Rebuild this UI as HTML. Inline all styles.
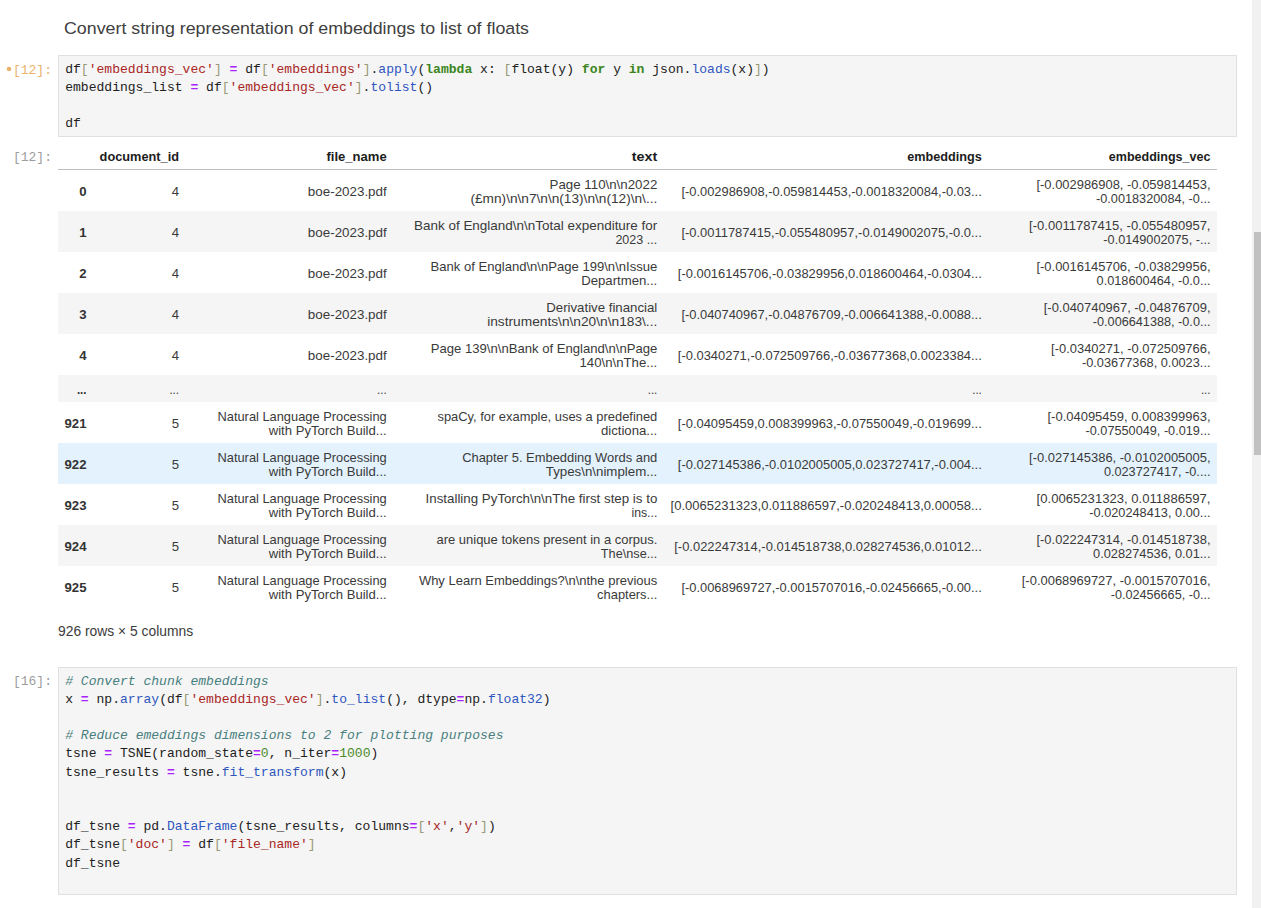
<!DOCTYPE html>
<html><head><meta charset="utf-8"><style>
html,body{margin:0;padding:0;background:#fff;width:1261px;height:908px;overflow:hidden}
svg{display:block}
text{white-space:pre}
</style></head><body>
<svg width="1261" height="908" viewBox="0 0 1261 908">
<rect x="58.5" y="55.5" width="1178" height="81" fill="#f5f5f5" stroke="#e0e0e0" stroke-width="1"/>
<circle cx="9" cy="69" r="2.3" fill="#e9b36e"/>
<rect x="58" y="211" width="1159" height="41" fill="#f5f5f5"/>
<rect x="58" y="293" width="1159" height="41" fill="#f5f5f5"/>
<rect x="58" y="375" width="1159" height="27" fill="#f5f5f5"/>
<rect x="58" y="443" width="1159" height="41" fill="#e3f2fd"/>
<rect x="58" y="525" width="1159" height="41" fill="#f5f5f5"/>
<rect x="58" y="169" width="1159" height="1" fill="#bdbdbd"/>
<rect x="58.5" y="667.5" width="1178" height="227" fill="#f5f5f5" stroke="#e0e0e0" stroke-width="1"/>
<rect x="1252" y="0" width="9" height="908" fill="#f1f1f1"/>
<rect x="1254" y="232" width="7" height="223" fill="#c1c1c1"/>
<text id="title" x="64.00" y="33.60" text-anchor="start" font-family="'Liberation Sans', sans-serif" font-size="17.20" fill="#404040" textLength="465.03" lengthAdjust="spacingAndGlyphs">Convert string representation of embeddings to list of floats</text>
<text id="p1" x="12.90" y="73.70" text-anchor="start" font-family="'Liberation Mono', monospace" font-size="13.00" fill="#e9b36e" textLength="39.14" lengthAdjust="spacingAndGlyphs">[12]:</text>
<text id="c1_0" x="65.20" y="73.00" text-anchor="start" font-family="'Liberation Mono', monospace" font-size="13.00" fill="#212121" textLength="704.50" lengthAdjust="spacingAndGlyphs"><tspan fill="#212121">df</tspan><tspan fill="#999977">[</tspan><tspan fill="#a8261f">'embeddings_vec'</tspan><tspan fill="#999977">]</tspan><tspan fill="#212121"> </tspan><tspan fill="#aa22ff" font-weight="700">=</tspan><tspan fill="#212121"> df</tspan><tspan fill="#999977">[</tspan><tspan fill="#a8261f">'embeddings'</tspan><tspan fill="#999977">]</tspan><tspan fill="#212121">.</tspan><tspan fill="#2f56bf">apply</tspan><tspan fill="#212121">(</tspan><tspan fill="#3a8520" font-weight="700">lambda</tspan><tspan fill="#212121"> x: </tspan><tspan fill="#999977">[</tspan><tspan fill="#212121">float(y) </tspan><tspan fill="#3a8520" font-weight="700">for</tspan><tspan fill="#212121"> y </tspan><tspan fill="#3a8520" font-weight="700">in</tspan><tspan fill="#212121"> json.</tspan><tspan fill="#2f56bf">loads</tspan><tspan fill="#212121">(x)</tspan><tspan fill="#999977">]</tspan><tspan fill="#212121">)</tspan></text>
<text id="c1_1" x="65.20" y="90.90" text-anchor="start" font-family="'Liberation Mono', monospace" font-size="13.00" fill="#212121" textLength="367.89" lengthAdjust="spacingAndGlyphs"><tspan fill="#212121">embeddings_list </tspan><tspan fill="#aa22ff" font-weight="700">=</tspan><tspan fill="#212121"> df</tspan><tspan fill="#999977">[</tspan><tspan fill="#a8261f">'embeddings_vec'</tspan><tspan fill="#999977">]</tspan><tspan fill="#212121">.</tspan><tspan fill="#2f56bf">tolist</tspan><tspan fill="#212121">()</tspan></text>
<text id="c1_3" x="65.20" y="126.70" text-anchor="start" font-family="'Liberation Mono', monospace" font-size="13.00" fill="#212121" textLength="15.66" lengthAdjust="spacingAndGlyphs"><tspan fill="#212121">df</tspan></text>
<text id="p2" x="12.90" y="160.90" text-anchor="start" font-family="'Liberation Mono', monospace" font-size="13.00" fill="#9e9e9e" textLength="39.14" lengthAdjust="spacingAndGlyphs">[12]:</text>
<text id="h1" x="179.00" y="160.50" text-anchor="end" font-family="'Liberation Sans', sans-serif" font-size="13.00" font-weight="700" fill="#1c1c1c" textLength="79.39" lengthAdjust="spacingAndGlyphs">document_id</text>
<text id="h2" x="386.70" y="160.50" text-anchor="end" font-family="'Liberation Sans', sans-serif" font-size="13.00" font-weight="700" fill="#1c1c1c" textLength="60.20" lengthAdjust="spacingAndGlyphs">file_name</text>
<text id="h3" x="657.30" y="160.50" text-anchor="end" font-family="'Liberation Sans', sans-serif" font-size="13.00" font-weight="700" fill="#1c1c1c" textLength="25.55" lengthAdjust="spacingAndGlyphs">text</text>
<text id="h4" x="981.80" y="160.50" text-anchor="end" font-family="'Liberation Sans', sans-serif" font-size="13.00" font-weight="700" fill="#1c1c1c" textLength="74.56" lengthAdjust="spacingAndGlyphs">embeddings</text>
<text id="h5" x="1210.50" y="160.50" text-anchor="end" font-family="'Liberation Sans', sans-serif" font-size="13.00" font-weight="700" fill="#1c1c1c" textLength="101.72" lengthAdjust="spacingAndGlyphs">embeddings_vec</text>
<text id="r0c0l0" x="86.50" y="196.10" text-anchor="end" font-family="'Liberation Sans', sans-serif" font-size="13.00" font-weight="700" fill="#333333" textLength="7.34" lengthAdjust="spacingAndGlyphs">0</text>
<text id="r0c1l0" x="179.00" y="196.10" text-anchor="end" font-family="'Liberation Sans', sans-serif" font-size="13.00" fill="#3a3a3a" textLength="7.34" lengthAdjust="spacingAndGlyphs">4</text>
<text id="r0c2l0" x="386.70" y="196.10" text-anchor="end" font-family="'Liberation Sans', sans-serif" font-size="13.00" fill="#3a3a3a" textLength="78.84" lengthAdjust="spacingAndGlyphs">boe-2023.pdf</text>
<text id="r0c3l0" x="657.30" y="189.10" text-anchor="end" font-family="'Liberation Sans', sans-serif" font-size="13.00" fill="#3a3a3a" textLength="107.72" lengthAdjust="spacingAndGlyphs">Page 110\n\n2022</text>
<text id="r0c3l1" x="657.30" y="203.10" text-anchor="end" font-family="'Liberation Sans', sans-serif" font-size="13.00" fill="#3a3a3a" textLength="186.84" lengthAdjust="spacingAndGlyphs">(£mn)\n\n7\n\n(13)\n\n(12)\n\...</text>
<text id="r0c4l0" x="981.80" y="196.10" text-anchor="end" font-family="'Liberation Sans', sans-serif" font-size="13.00" fill="#3a3a3a" textLength="300.42" lengthAdjust="spacingAndGlyphs">[-0.002986908,-0.059814453,-0.0018320084,-0.03...</text>
<text id="r0c5l0" x="1210.50" y="189.10" text-anchor="end" font-family="'Liberation Sans', sans-serif" font-size="13.00" fill="#3a3a3a" textLength="174.05" lengthAdjust="spacingAndGlyphs">[-0.002986908, -0.059814453,</text>
<text id="r0c5l1" x="1210.50" y="203.10" text-anchor="end" font-family="'Liberation Sans', sans-serif" font-size="13.00" fill="#3a3a3a" textLength="114.47" lengthAdjust="spacingAndGlyphs">-0.0018320084, -0...</text>
<text id="r1c0l0" x="86.50" y="237.10" text-anchor="end" font-family="'Liberation Sans', sans-serif" font-size="13.00" font-weight="700" fill="#333333" textLength="7.34" lengthAdjust="spacingAndGlyphs">1</text>
<text id="r1c1l0" x="179.00" y="237.10" text-anchor="end" font-family="'Liberation Sans', sans-serif" font-size="13.00" fill="#3a3a3a" textLength="7.34" lengthAdjust="spacingAndGlyphs">4</text>
<text id="r1c2l0" x="386.70" y="237.10" text-anchor="end" font-family="'Liberation Sans', sans-serif" font-size="13.00" fill="#3a3a3a" textLength="78.84" lengthAdjust="spacingAndGlyphs">boe-2023.pdf</text>
<text id="r1c3l0" x="657.30" y="230.10" text-anchor="end" font-family="'Liberation Sans', sans-serif" font-size="13.00" fill="#3a3a3a" textLength="243.33" lengthAdjust="spacingAndGlyphs">Bank of England\n\nTotal expenditure for</text>
<text id="r1c3l1" x="657.30" y="244.10" text-anchor="end" font-family="'Liberation Sans', sans-serif" font-size="13.00" fill="#3a3a3a" textLength="41.91" lengthAdjust="spacingAndGlyphs">2023 ...</text>
<text id="r1c4l0" x="981.80" y="237.10" text-anchor="end" font-family="'Liberation Sans', sans-serif" font-size="13.00" fill="#3a3a3a" textLength="300.42" lengthAdjust="spacingAndGlyphs">[-0.0011787415,-0.055480957,-0.0149002075,-0.0...</text>
<text id="r1c5l0" x="1210.50" y="230.10" text-anchor="end" font-family="'Liberation Sans', sans-serif" font-size="13.00" fill="#3a3a3a" textLength="181.39" lengthAdjust="spacingAndGlyphs">[-0.0011787415, -0.055480957,</text>
<text id="r1c5l1" x="1210.50" y="244.10" text-anchor="end" font-family="'Liberation Sans', sans-serif" font-size="13.00" fill="#3a3a3a" textLength="107.14" lengthAdjust="spacingAndGlyphs">-0.0149002075, -...</text>
<text id="r2c0l0" x="86.50" y="278.10" text-anchor="end" font-family="'Liberation Sans', sans-serif" font-size="13.00" font-weight="700" fill="#333333" textLength="7.34" lengthAdjust="spacingAndGlyphs">2</text>
<text id="r2c1l0" x="179.00" y="278.10" text-anchor="end" font-family="'Liberation Sans', sans-serif" font-size="13.00" fill="#3a3a3a" textLength="7.34" lengthAdjust="spacingAndGlyphs">4</text>
<text id="r2c2l0" x="386.70" y="278.10" text-anchor="end" font-family="'Liberation Sans', sans-serif" font-size="13.00" fill="#3a3a3a" textLength="78.84" lengthAdjust="spacingAndGlyphs">boe-2023.pdf</text>
<text id="r2c3l0" x="657.30" y="271.10" text-anchor="end" font-family="'Liberation Sans', sans-serif" font-size="13.00" fill="#3a3a3a" textLength="226.78" lengthAdjust="spacingAndGlyphs">Bank of England\n\nPage 199\n\nIssue</text>
<text id="r2c3l1" x="657.30" y="285.10" text-anchor="end" font-family="'Liberation Sans', sans-serif" font-size="13.00" fill="#3a3a3a" textLength="76.09" lengthAdjust="spacingAndGlyphs">Departmen...</text>
<text id="r2c4l0" x="981.80" y="278.10" text-anchor="end" font-family="'Liberation Sans', sans-serif" font-size="13.00" fill="#3a3a3a" textLength="304.00" lengthAdjust="spacingAndGlyphs">[-0.0016145706,-0.03829956,0.018600464,-0.0304...</text>
<text id="r2c5l0" x="1210.50" y="271.10" text-anchor="end" font-family="'Liberation Sans', sans-serif" font-size="13.00" fill="#3a3a3a" textLength="174.05" lengthAdjust="spacingAndGlyphs">[-0.0016145706, -0.03829956,</text>
<text id="r2c5l1" x="1210.50" y="285.10" text-anchor="end" font-family="'Liberation Sans', sans-serif" font-size="13.00" fill="#3a3a3a" textLength="113.91" lengthAdjust="spacingAndGlyphs">0.018600464, -0.0...</text>
<text id="r3c0l0" x="86.50" y="319.10" text-anchor="end" font-family="'Liberation Sans', sans-serif" font-size="13.00" font-weight="700" fill="#333333" textLength="7.34" lengthAdjust="spacingAndGlyphs">3</text>
<text id="r3c1l0" x="179.00" y="319.10" text-anchor="end" font-family="'Liberation Sans', sans-serif" font-size="13.00" fill="#3a3a3a" textLength="7.34" lengthAdjust="spacingAndGlyphs">4</text>
<text id="r3c2l0" x="386.70" y="319.10" text-anchor="end" font-family="'Liberation Sans', sans-serif" font-size="13.00" fill="#3a3a3a" textLength="78.84" lengthAdjust="spacingAndGlyphs">boe-2023.pdf</text>
<text id="r3c3l0" x="657.30" y="312.10" text-anchor="end" font-family="'Liberation Sans', sans-serif" font-size="13.00" fill="#3a3a3a" textLength="111.08" lengthAdjust="spacingAndGlyphs">Derivative financial</text>
<text id="r3c3l1" x="657.30" y="326.10" text-anchor="end" font-family="'Liberation Sans', sans-serif" font-size="13.00" fill="#3a3a3a" textLength="170.12" lengthAdjust="spacingAndGlyphs">instruments\n\n20\n\n183\...</text>
<text id="r3c4l0" x="981.80" y="319.10" text-anchor="end" font-family="'Liberation Sans', sans-serif" font-size="13.00" fill="#3a3a3a" textLength="300.42" lengthAdjust="spacingAndGlyphs">[-0.040740967,-0.04876709,-0.006641388,-0.0088...</text>
<text id="r3c5l0" x="1210.50" y="312.10" text-anchor="end" font-family="'Liberation Sans', sans-serif" font-size="13.00" fill="#3a3a3a" textLength="166.72" lengthAdjust="spacingAndGlyphs">[-0.040740967, -0.04876709,</text>
<text id="r3c5l1" x="1210.50" y="326.10" text-anchor="end" font-family="'Liberation Sans', sans-serif" font-size="13.00" fill="#3a3a3a" textLength="117.67" lengthAdjust="spacingAndGlyphs">-0.006641388, -0.0...</text>
<text id="r4c0l0" x="86.50" y="360.10" text-anchor="end" font-family="'Liberation Sans', sans-serif" font-size="13.00" font-weight="700" fill="#333333" textLength="7.34" lengthAdjust="spacingAndGlyphs">4</text>
<text id="r4c1l0" x="179.00" y="360.10" text-anchor="end" font-family="'Liberation Sans', sans-serif" font-size="13.00" fill="#3a3a3a" textLength="7.34" lengthAdjust="spacingAndGlyphs">4</text>
<text id="r4c2l0" x="386.70" y="360.10" text-anchor="end" font-family="'Liberation Sans', sans-serif" font-size="13.00" fill="#3a3a3a" textLength="78.84" lengthAdjust="spacingAndGlyphs">boe-2023.pdf</text>
<text id="r4c3l0" x="657.30" y="353.10" text-anchor="end" font-family="'Liberation Sans', sans-serif" font-size="13.00" fill="#3a3a3a" textLength="226.56" lengthAdjust="spacingAndGlyphs">Page 139\n\nBank of England\n\nPage</text>
<text id="r4c3l1" x="657.30" y="367.10" text-anchor="end" font-family="'Liberation Sans', sans-serif" font-size="13.00" fill="#3a3a3a" textLength="77.84" lengthAdjust="spacingAndGlyphs">140\n\nThe...</text>
<text id="r4c4l0" x="981.80" y="360.10" text-anchor="end" font-family="'Liberation Sans', sans-serif" font-size="13.00" fill="#3a3a3a" textLength="304.00" lengthAdjust="spacingAndGlyphs">[-0.0340271,-0.072509766,-0.03677368,0.0023384...</text>
<text id="r4c5l0" x="1210.50" y="353.10" text-anchor="end" font-family="'Liberation Sans', sans-serif" font-size="13.00" fill="#3a3a3a" textLength="159.39" lengthAdjust="spacingAndGlyphs">[-0.0340271, -0.072509766,</text>
<text id="r4c5l1" x="1210.50" y="367.10" text-anchor="end" font-family="'Liberation Sans', sans-serif" font-size="13.00" fill="#3a3a3a" textLength="128.58" lengthAdjust="spacingAndGlyphs">-0.03677368, 0.0023...</text>
<text id="r5c0l0" x="86.50" y="394.10" text-anchor="end" font-family="'Liberation Sans', sans-serif" font-size="13.00" font-weight="700" fill="#333333" textLength="9.61" lengthAdjust="spacingAndGlyphs">...</text>
<text id="r5c1l0" x="179.00" y="394.10" text-anchor="end" font-family="'Liberation Sans', sans-serif" font-size="13.00" fill="#3a3a3a" textLength="9.61" lengthAdjust="spacingAndGlyphs">...</text>
<text id="r5c2l0" x="386.70" y="394.10" text-anchor="end" font-family="'Liberation Sans', sans-serif" font-size="13.00" fill="#3a3a3a" textLength="9.61" lengthAdjust="spacingAndGlyphs">...</text>
<text id="r5c3l0" x="657.30" y="394.10" text-anchor="end" font-family="'Liberation Sans', sans-serif" font-size="13.00" fill="#3a3a3a" textLength="9.61" lengthAdjust="spacingAndGlyphs">...</text>
<text id="r5c4l0" x="981.80" y="394.10" text-anchor="end" font-family="'Liberation Sans', sans-serif" font-size="13.00" fill="#3a3a3a" textLength="9.61" lengthAdjust="spacingAndGlyphs">...</text>
<text id="r5c5l0" x="1210.50" y="394.10" text-anchor="end" font-family="'Liberation Sans', sans-serif" font-size="13.00" fill="#3a3a3a" textLength="9.61" lengthAdjust="spacingAndGlyphs">...</text>
<text id="r6c0l0" x="86.50" y="428.10" text-anchor="end" font-family="'Liberation Sans', sans-serif" font-size="13.00" font-weight="700" fill="#333333" textLength="22.00" lengthAdjust="spacingAndGlyphs">921</text>
<text id="r6c1l0" x="179.00" y="428.10" text-anchor="end" font-family="'Liberation Sans', sans-serif" font-size="13.00" fill="#3a3a3a" textLength="7.34" lengthAdjust="spacingAndGlyphs">5</text>
<text id="r6c2l0" x="386.70" y="421.10" text-anchor="end" font-family="'Liberation Sans', sans-serif" font-size="13.00" fill="#3a3a3a" textLength="169.23" lengthAdjust="spacingAndGlyphs">Natural Language Processing</text>
<text id="r6c2l1" x="386.70" y="435.10" text-anchor="end" font-family="'Liberation Sans', sans-serif" font-size="13.00" fill="#3a3a3a" textLength="117.95" lengthAdjust="spacingAndGlyphs">with PyTorch Build...</text>
<text id="r6c3l0" x="657.30" y="421.10" text-anchor="end" font-family="'Liberation Sans', sans-serif" font-size="13.00" fill="#3a3a3a" textLength="219.86" lengthAdjust="spacingAndGlyphs">spaCy, for example, uses a predefined</text>
<text id="r6c3l1" x="657.30" y="435.10" text-anchor="end" font-family="'Liberation Sans', sans-serif" font-size="13.00" fill="#3a3a3a" textLength="56.39" lengthAdjust="spacingAndGlyphs">dictiona...</text>
<text id="r6c4l0" x="981.80" y="428.10" text-anchor="end" font-family="'Liberation Sans', sans-serif" font-size="13.00" fill="#3a3a3a" textLength="304.00" lengthAdjust="spacingAndGlyphs">[-0.04095459,0.008399963,-0.07550049,-0.019699...</text>
<text id="r6c5l0" x="1210.50" y="421.10" text-anchor="end" font-family="'Liberation Sans', sans-serif" font-size="13.00" fill="#3a3a3a" textLength="162.97" lengthAdjust="spacingAndGlyphs">[-0.04095459, 0.008399963,</text>
<text id="r6c5l1" x="1210.50" y="435.10" text-anchor="end" font-family="'Liberation Sans', sans-serif" font-size="13.00" fill="#3a3a3a" textLength="125.00" lengthAdjust="spacingAndGlyphs">-0.07550049, -0.019...</text>
<text id="r7c0l0" x="86.50" y="469.10" text-anchor="end" font-family="'Liberation Sans', sans-serif" font-size="13.00" font-weight="700" fill="#333333" textLength="22.00" lengthAdjust="spacingAndGlyphs">922</text>
<text id="r7c1l0" x="179.00" y="469.10" text-anchor="end" font-family="'Liberation Sans', sans-serif" font-size="13.00" fill="#3a3a3a" textLength="7.34" lengthAdjust="spacingAndGlyphs">5</text>
<text id="r7c2l0" x="386.70" y="462.10" text-anchor="end" font-family="'Liberation Sans', sans-serif" font-size="13.00" fill="#3a3a3a" textLength="169.23" lengthAdjust="spacingAndGlyphs">Natural Language Processing</text>
<text id="r7c2l1" x="386.70" y="476.10" text-anchor="end" font-family="'Liberation Sans', sans-serif" font-size="13.00" fill="#3a3a3a" textLength="117.95" lengthAdjust="spacingAndGlyphs">with PyTorch Build...</text>
<text id="r7c3l0" x="657.30" y="462.10" text-anchor="end" font-family="'Liberation Sans', sans-serif" font-size="13.00" fill="#3a3a3a" textLength="195.17" lengthAdjust="spacingAndGlyphs">Chapter 5. Embedding Words and</text>
<text id="r7c3l1" x="657.30" y="476.10" text-anchor="end" font-family="'Liberation Sans', sans-serif" font-size="13.00" fill="#3a3a3a" textLength="111.48" lengthAdjust="spacingAndGlyphs">Types\n\nimplem...</text>
<text id="r7c4l0" x="981.80" y="469.10" text-anchor="end" font-family="'Liberation Sans', sans-serif" font-size="13.00" fill="#3a3a3a" textLength="304.00" lengthAdjust="spacingAndGlyphs">[-0.027145386,-0.0102005005,0.023727417,-0.004...</text>
<text id="r7c5l0" x="1210.50" y="462.10" text-anchor="end" font-family="'Liberation Sans', sans-serif" font-size="13.00" fill="#3a3a3a" textLength="181.39" lengthAdjust="spacingAndGlyphs">[-0.027145386, -0.0102005005,</text>
<text id="r7c5l1" x="1210.50" y="476.10" text-anchor="end" font-family="'Liberation Sans', sans-serif" font-size="13.00" fill="#3a3a3a" textLength="106.58" lengthAdjust="spacingAndGlyphs">0.023727417, -0....</text>
<text id="r8c0l0" x="86.50" y="510.10" text-anchor="end" font-family="'Liberation Sans', sans-serif" font-size="13.00" font-weight="700" fill="#333333" textLength="22.00" lengthAdjust="spacingAndGlyphs">923</text>
<text id="r8c1l0" x="179.00" y="510.10" text-anchor="end" font-family="'Liberation Sans', sans-serif" font-size="13.00" fill="#3a3a3a" textLength="7.34" lengthAdjust="spacingAndGlyphs">5</text>
<text id="r8c2l0" x="386.70" y="503.10" text-anchor="end" font-family="'Liberation Sans', sans-serif" font-size="13.00" fill="#3a3a3a" textLength="169.23" lengthAdjust="spacingAndGlyphs">Natural Language Processing</text>
<text id="r8c2l1" x="386.70" y="517.10" text-anchor="end" font-family="'Liberation Sans', sans-serif" font-size="13.00" fill="#3a3a3a" textLength="117.95" lengthAdjust="spacingAndGlyphs">with PyTorch Build...</text>
<text id="r8c3l0" x="657.30" y="503.10" text-anchor="end" font-family="'Liberation Sans', sans-serif" font-size="13.00" fill="#3a3a3a" textLength="231.72" lengthAdjust="spacingAndGlyphs">Installing PyTorch\n\nThe first step is to</text>
<text id="r8c3l1" x="657.30" y="517.10" text-anchor="end" font-family="'Liberation Sans', sans-serif" font-size="13.00" fill="#3a3a3a" textLength="25.83" lengthAdjust="spacingAndGlyphs">ins...</text>
<text id="r8c4l0" x="981.80" y="510.10" text-anchor="end" font-family="'Liberation Sans', sans-serif" font-size="13.00" fill="#3a3a3a" textLength="311.16" lengthAdjust="spacingAndGlyphs">[0.0065231323,0.011886597,-0.020248413,0.00058...</text>
<text id="r8c5l0" x="1210.50" y="503.10" text-anchor="end" font-family="'Liberation Sans', sans-serif" font-size="13.00" fill="#3a3a3a" textLength="173.88" lengthAdjust="spacingAndGlyphs">[0.0065231323, 0.011886597,</text>
<text id="r8c5l1" x="1210.50" y="517.10" text-anchor="end" font-family="'Liberation Sans', sans-serif" font-size="13.00" fill="#3a3a3a" textLength="121.25" lengthAdjust="spacingAndGlyphs">-0.020248413, 0.00...</text>
<text id="r9c0l0" x="86.50" y="551.10" text-anchor="end" font-family="'Liberation Sans', sans-serif" font-size="13.00" font-weight="700" fill="#333333" textLength="22.00" lengthAdjust="spacingAndGlyphs">924</text>
<text id="r9c1l0" x="179.00" y="551.10" text-anchor="end" font-family="'Liberation Sans', sans-serif" font-size="13.00" fill="#3a3a3a" textLength="7.34" lengthAdjust="spacingAndGlyphs">5</text>
<text id="r9c2l0" x="386.70" y="544.10" text-anchor="end" font-family="'Liberation Sans', sans-serif" font-size="13.00" fill="#3a3a3a" textLength="169.23" lengthAdjust="spacingAndGlyphs">Natural Language Processing</text>
<text id="r9c2l1" x="386.70" y="558.10" text-anchor="end" font-family="'Liberation Sans', sans-serif" font-size="13.00" fill="#3a3a3a" textLength="117.95" lengthAdjust="spacingAndGlyphs">with PyTorch Build...</text>
<text id="r9c3l0" x="657.30" y="544.10" text-anchor="end" font-family="'Liberation Sans', sans-serif" font-size="13.00" fill="#3a3a3a" textLength="220.84" lengthAdjust="spacingAndGlyphs">are unique tokens present in a corpus.</text>
<text id="r9c3l1" x="657.30" y="558.10" text-anchor="end" font-family="'Liberation Sans', sans-serif" font-size="13.00" fill="#3a3a3a" textLength="56.45" lengthAdjust="spacingAndGlyphs">The\nse...</text>
<text id="r9c4l0" x="981.80" y="551.10" text-anchor="end" font-family="'Liberation Sans', sans-serif" font-size="13.00" fill="#3a3a3a" textLength="307.58" lengthAdjust="spacingAndGlyphs">[-0.022247314,-0.014518738,0.028274536,0.01012...</text>
<text id="r9c5l0" x="1210.50" y="544.10" text-anchor="end" font-family="'Liberation Sans', sans-serif" font-size="13.00" fill="#3a3a3a" textLength="174.05" lengthAdjust="spacingAndGlyphs">[-0.022247314, -0.014518738,</text>
<text id="r9c5l1" x="1210.50" y="558.10" text-anchor="end" font-family="'Liberation Sans', sans-serif" font-size="13.00" fill="#3a3a3a" textLength="117.48" lengthAdjust="spacingAndGlyphs">0.028274536, 0.01...</text>
<text id="r10c0l0" x="86.50" y="592.10" text-anchor="end" font-family="'Liberation Sans', sans-serif" font-size="13.00" font-weight="700" fill="#333333" textLength="22.00" lengthAdjust="spacingAndGlyphs">925</text>
<text id="r10c1l0" x="179.00" y="592.10" text-anchor="end" font-family="'Liberation Sans', sans-serif" font-size="13.00" fill="#3a3a3a" textLength="7.34" lengthAdjust="spacingAndGlyphs">5</text>
<text id="r10c2l0" x="386.70" y="585.10" text-anchor="end" font-family="'Liberation Sans', sans-serif" font-size="13.00" fill="#3a3a3a" textLength="169.23" lengthAdjust="spacingAndGlyphs">Natural Language Processing</text>
<text id="r10c2l1" x="386.70" y="599.10" text-anchor="end" font-family="'Liberation Sans', sans-serif" font-size="13.00" fill="#3a3a3a" textLength="117.95" lengthAdjust="spacingAndGlyphs">with PyTorch Build...</text>
<text id="r10c3l0" x="657.30" y="585.10" text-anchor="end" font-family="'Liberation Sans', sans-serif" font-size="13.00" fill="#3a3a3a" textLength="238.42" lengthAdjust="spacingAndGlyphs">Why Learn Embeddings?\n\nthe previous</text>
<text id="r10c3l1" x="657.30" y="599.10" text-anchor="end" font-family="'Liberation Sans', sans-serif" font-size="13.00" fill="#3a3a3a" textLength="60.19" lengthAdjust="spacingAndGlyphs">chapters...</text>
<text id="r10c4l0" x="981.80" y="592.10" text-anchor="end" font-family="'Liberation Sans', sans-serif" font-size="13.00" fill="#3a3a3a" textLength="300.42" lengthAdjust="spacingAndGlyphs">[-0.0068969727,-0.0015707016,-0.02456665,-0.00...</text>
<text id="r10c5l0" x="1210.50" y="585.10" text-anchor="end" font-family="'Liberation Sans', sans-serif" font-size="13.00" fill="#3a3a3a" textLength="188.72" lengthAdjust="spacingAndGlyphs">[-0.0068969727, -0.0015707016,</text>
<text id="r10c5l1" x="1210.50" y="599.10" text-anchor="end" font-family="'Liberation Sans', sans-serif" font-size="13.00" fill="#3a3a3a" textLength="99.81" lengthAdjust="spacingAndGlyphs">-0.02456665, -0...</text>
<text id="footer" x="58.00" y="635.80" text-anchor="start" font-family="'Liberation Sans', sans-serif" font-size="14.00" fill="#3c3c3c" textLength="135.19" lengthAdjust="spacingAndGlyphs">926 rows × 5 columns</text>
<text id="p3" x="12.90" y="684.80" text-anchor="start" font-family="'Liberation Mono', monospace" font-size="13.00" fill="#9e9e9e" textLength="39.14" lengthAdjust="spacingAndGlyphs">[16]:</text>
<text id="c2_0" x="65.20" y="684.80" text-anchor="start" font-family="'Liberation Mono', monospace" font-size="13.00" fill="#212121" textLength="203.50" lengthAdjust="spacingAndGlyphs"><tspan fill="#487f80" font-style="italic"># Convert chunk embeddings</tspan></text>
<text id="c2_1" x="65.20" y="702.97" text-anchor="start" font-family="'Liberation Mono', monospace" font-size="13.00" fill="#212121" textLength="485.33" lengthAdjust="spacingAndGlyphs"><tspan fill="#212121">x </tspan><tspan fill="#aa22ff" font-weight="700">=</tspan><tspan fill="#212121"> np.</tspan><tspan fill="#2f56bf">array</tspan><tspan fill="#212121">(df</tspan><tspan fill="#999977">[</tspan><tspan fill="#a8261f">'embeddings_vec'</tspan><tspan fill="#999977">]</tspan><tspan fill="#212121">.</tspan><tspan fill="#2f56bf">to_list</tspan><tspan fill="#212121">(), dtype</tspan><tspan fill="#aa22ff" font-weight="700">=</tspan><tspan fill="#212121">np.</tspan><tspan fill="#2f56bf">float32</tspan><tspan fill="#212121">)</tspan></text>
<text id="c2_3" x="65.20" y="739.31" text-anchor="start" font-family="'Liberation Mono', monospace" font-size="13.00" fill="#212121" textLength="438.30" lengthAdjust="spacingAndGlyphs"><tspan fill="#487f80" font-style="italic"># Reduce emeddings dimensions to 2 for plotting purposes</tspan></text>
<text id="c2_4" x="65.20" y="757.48" text-anchor="start" font-family="'Liberation Mono', monospace" font-size="13.00" fill="#212121" textLength="313.11" lengthAdjust="spacingAndGlyphs"><tspan fill="#212121">tsne </tspan><tspan fill="#aa22ff" font-weight="700">=</tspan><tspan fill="#212121"> TSNE(random_state</tspan><tspan fill="#aa22ff" font-weight="700">=</tspan><tspan fill="#4a8a28">0</tspan><tspan fill="#212121">, n_iter</tspan><tspan fill="#aa22ff" font-weight="700">=</tspan><tspan fill="#4a8a28">1000</tspan><tspan fill="#212121">)</tspan></text>
<text id="c2_5" x="65.20" y="775.65" text-anchor="start" font-family="'Liberation Mono', monospace" font-size="13.00" fill="#212121" textLength="281.78" lengthAdjust="spacingAndGlyphs"><tspan fill="#212121">tsne_results </tspan><tspan fill="#aa22ff" font-weight="700">=</tspan><tspan fill="#212121"> tsne.</tspan><tspan fill="#2f56bf">fit_transform</tspan><tspan fill="#212121">(x)</tspan></text>
<text id="c2_8" x="65.20" y="830.16" text-anchor="start" font-family="'Liberation Mono', monospace" font-size="13.00" fill="#212121" textLength="430.52" lengthAdjust="spacingAndGlyphs"><tspan fill="#212121">df_tsne </tspan><tspan fill="#aa22ff" font-weight="700">=</tspan><tspan fill="#212121"> pd.</tspan><tspan fill="#2f56bf">DataFrame</tspan><tspan fill="#212121">(tsne_results, columns</tspan><tspan fill="#aa22ff" font-weight="700">=</tspan><tspan fill="#999977">[</tspan><tspan fill="#a8261f">'x'</tspan><tspan fill="#212121">,</tspan><tspan fill="#a8261f">'y'</tspan><tspan fill="#999977">]</tspan><tspan fill="#212121">)</tspan></text>
<text id="c2_9" x="65.20" y="848.33" text-anchor="start" font-family="'Liberation Mono', monospace" font-size="13.00" fill="#212121" textLength="250.48" lengthAdjust="spacingAndGlyphs"><tspan fill="#212121">df_tsne</tspan><tspan fill="#999977">[</tspan><tspan fill="#a8261f">'doc'</tspan><tspan fill="#999977">]</tspan><tspan fill="#212121"> </tspan><tspan fill="#aa22ff" font-weight="700">=</tspan><tspan fill="#212121"> df</tspan><tspan fill="#999977">[</tspan><tspan fill="#a8261f">'file_name'</tspan><tspan fill="#999977">]</tspan></text>
<text id="c2_10" x="65.20" y="866.50" text-anchor="start" font-family="'Liberation Mono', monospace" font-size="13.00" fill="#212121" textLength="54.80" lengthAdjust="spacingAndGlyphs"><tspan fill="#212121">df_tsne</tspan></text>
</svg>
</body></html>
